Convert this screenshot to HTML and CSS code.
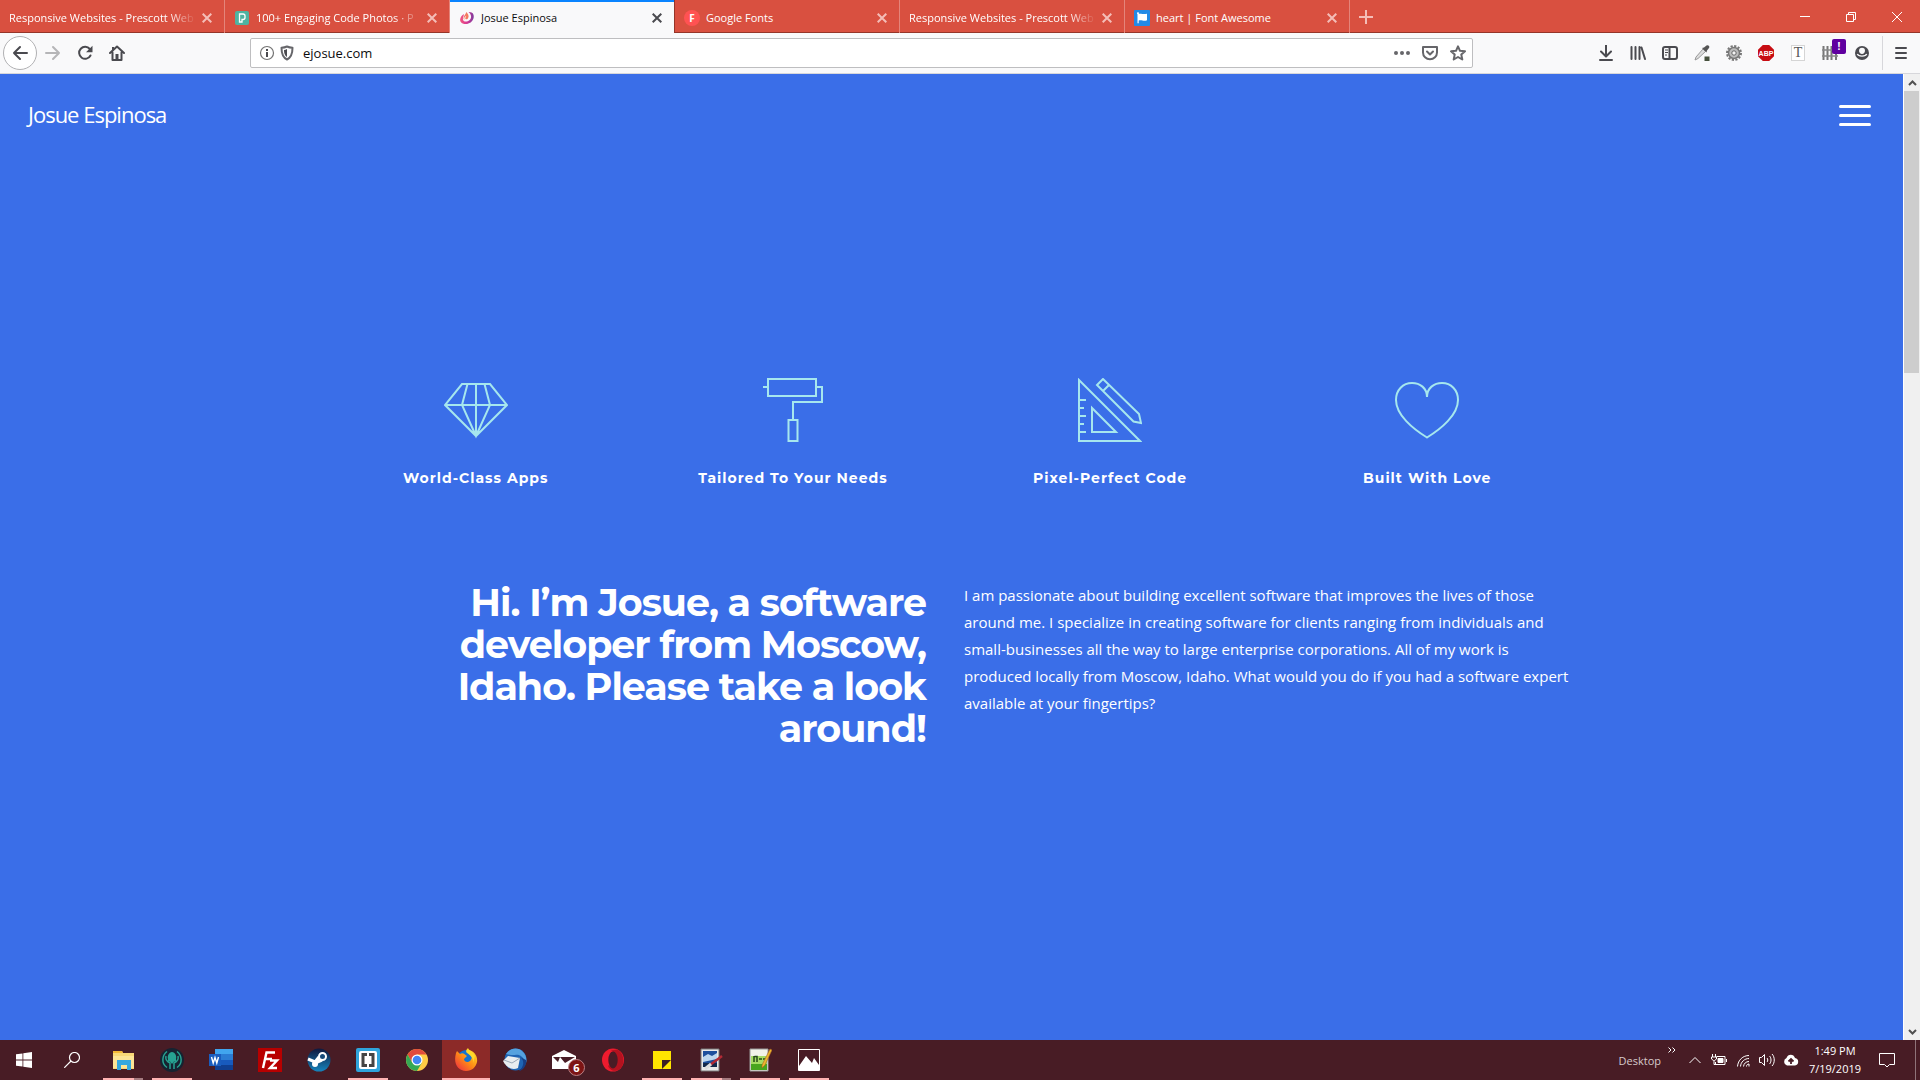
FILE: index.html
```html
<!DOCTYPE html>
<html lang="en">
<head>
<meta charset="utf-8">
<title>Josue Espinosa</title>
<link rel="stylesheet" href="styles.css">
</head>
<body>
<div class="tabstrip">
  <div class="tab tab-long">
    <button class="tab-title">Responsive Websites - Prescott Web</button>
    <button class="tab-close" aria-label="Close tab"><svg width="10" height="10" viewBox="0 0 10 10"><path d="M.7.7l8.6 8.6M9.3.7L.7 9.3"/></svg></button>
  </div>
  <div class="tab tab-long">
    <svg class="favicon" width="16" height="16" viewBox="0 0 16 16"><rect x="1" y="1" width="14" height="14" rx="2" fill="#4fb3a1"/><path d="M5.500 4h3.500a2 2 0 0 1 2 2v1.500a2 2 0 0 1-2 2H8v2.500H5.500z" fill="none" stroke="#fff" stroke-width="1.300"/></svg>
    <button class="tab-title">100+ Engaging Code Photos · P</button>
    <button class="tab-close" aria-label="Close tab"><svg width="10" height="10" viewBox="0 0 10 10"><path d="M.7.7l8.6 8.6M9.3.7L.7 9.3"/></svg></button>
  </div>
  <div class="tab tab-active">
    <svg class="favicon" width="16" height="16" viewBox="0 0 16 16"><defs><linearGradient id="swirl" x1="0" x2="1"><stop offset="0" stop-color="#f2577e"/><stop offset=".5" stop-color="#d83a94"/><stop offset="1" stop-color="#7a3a9d"/></linearGradient></defs><path d="M9.500 2C13.500 1.500 15.500 4.500 14.600 8c-1 4-4.600 6.200-8.300 6C3 13.900.6 12 1.200 9c.4-2.300 2-3.900 3.600-5 .2 2-1.100 3.400-.9 5.300.2 2 2 2.500 3.800 2.200 2.900-.5 4.800-3 4.300-5.500-.3-1.800-1.200-3-2.500-4z" fill="url(#swirl)"/><path d="M4.500 8.500C4.500 5.500 7 4.200 7.300 2c1.800 1.700 3.200 4.400 1.600 6.400C7.900 9.800 6 9.500 6.300 8c.2-.8.900-1.200.8-2-1.200.5-2.200 1.600-1.800 4.200z" fill="#f47a60"/></svg>
    <button class="tab-title">Josue Espinosa</button>
    <button class="tab-close" aria-label="Close tab"><svg width="10" height="10" viewBox="0 0 10 10"><path d="M.7.7l8.6 8.6M9.3.7L.7 9.3"/></svg></button>
  </div>
  <div class="tab">
    <span class="favicon favicon-f">F</span>
    <button class="tab-title">Google Fonts</button>
    <button class="tab-close" aria-label="Close tab"><svg width="10" height="10" viewBox="0 0 10 10"><path d="M.7.7l8.6 8.6M9.3.7L.7 9.3"/></svg></button>
  </div>
  <div class="tab tab-long">
    <button class="tab-title">Responsive Websites - Prescott Web</button>
    <button class="tab-close" aria-label="Close tab"><svg width="10" height="10" viewBox="0 0 10 10"><path d="M.7.7l8.6 8.6M9.3.7L.7 9.3"/></svg></button>
  </div>
  <div class="tab">
    <svg class="favicon" width="16" height="16" viewBox="0 0 16 16"><rect width="16" height="16" rx="1" fill="#228ae6"/><path d="M3 3.300a1 1 0 1 1 1.700.7c2.500-1 4 .9 8.300-.3v6.600c-3.600 1.600-5-.8-8.300.3v2.600H3.500V4.200A1 1 0 0 1 3 3.300z" fill="#fff"/></svg>
    <button class="tab-title">heart | Font Awesome</button>
    <button class="tab-close" aria-label="Close tab"><svg width="10" height="10" viewBox="0 0 10 10"><path d="M.7.7l8.6 8.6M9.3.7L.7 9.3"/></svg></button>
  </div>
  <button class="new-tab" aria-label="New tab"><svg width="14" height="14" viewBox="0 0 14 14"><path d="M7 0v14M0 7h14"/></svg></button>
  <div class="window-controls">
    <button aria-label="Minimize"><svg width="10" height="10" viewBox="0 0 10 10"><path d="M0 4.500h10"/></svg></button>
    <button aria-label="Restore"><svg width="10" height="10" viewBox="0 0 10 10"><path d="M.5 2.500h7v7h-7zM2.500 2.500v-2h7v7h-2"/></svg></button>
    <button aria-label="Close window"><svg width="10" height="10" viewBox="0 0 10 10"><path d="M0 0l10 10M10 0L0 10"/></svg></button>
  </div>
</div>

<div class="toolbar">
  <div class="nav-buttons">
    <button class="back" aria-label="Back"><svg width="16" height="16" viewBox="0 0 16 16"><path class="line" d="M15 8H2M8 2L2 8l6 6"/></svg></button>
    <button class="forward" aria-label="Forward"><svg width="16" height="16" viewBox="0 0 16 16"><path class="line" d="M1 8h13M8 2l6 6-6 6"/></svg></button>
    <button aria-label="Reload"><svg width="16" height="16" viewBox="0 0 16 16"><path class="line" d="M13.500 10.500A6 6 0 1 1 12.800 4"/><path class="solid" d="M15.500.7v6.500H9z"/></svg></button>
    <button aria-label="Home"><svg width="16" height="16" viewBox="0 0 16 16"><path class="line" d="M1 8l7-6.500L15 8M3.500 7.500V15h9V7.500"/><path class="solid" d="M6.500 9h3v6h-3zM3 2h2v3H3z"/></svg></button>
  </div>
  <div class="urlbar">
    <svg width="16" height="16" viewBox="0 0 16 16"><circle cx="8" cy="8" r="6.500" fill="none" stroke="#737373" stroke-width="1.200"/><path class="solid" d="M7 7h2v5H7zM7 4h2v2H7z"/></svg>
    <svg width="16" height="16" viewBox="0 0 16 16"><path class="line" d="M8 1.500c1.700.8 3.500 1.200 5.500 1.300 0 5.600-.9 9.600-5.500 11.700C3.400 12.400 2.500 8.400 2.500 2.800 4.500 2.700 6.300 2.300 8 1.500z"/><path class="solid" d="M8 4v8C5.600 10.400 5 8 5 5c1 0 2-.3 3-1z"/></svg>
    <input class="address" type="text" value="ejosue.com" aria-label="Address">
    <button aria-label="Page actions"><svg width="16" height="16" viewBox="0 0 16 16"><g fill="#66666a"><circle cx="2" cy="8" r="2"/><circle cx="8" cy="8" r="2"/><circle cx="14" cy="8" r="2"/></g></svg></button>
    <button aria-label="Save to Pocket"><svg width="16" height="16" viewBox="0 0 16 16"><path class="line" d="M1 2h14v5.500a7 6.800 0 0 1-14 0z"/><path class="line" d="M5 6.500l3 3 3-3"/></svg></button>
    <button aria-label="Bookmark"><svg width="16" height="16" viewBox="0 0 16 16"><path class="line" d="M8 1.300l2 4.500 5 .5-3.700 3.300 1 4.900L8 12l-4.300 2.500 1-4.900L1 6.300l5-.5z"/></svg></button>
  </div>
  <div class="tools">
    <button aria-label="Downloads"><svg width="16" height="16" viewBox="0 0 16 16"><path class="line" d="M8 0v11M3 6.500l5 5 5-5M2 15h12"/></svg></button>
    <button aria-label="Library"><svg width="16" height="16" viewBox="0 0 16 16"><path class="line" d="M1.500 2v12M5.500 2v12M9.500 2v12M11.500 2.500L15 14"/></svg></button>
    <button aria-label="Sidebars"><svg width="16" height="16" viewBox="0 0 16 16"><rect class="line" x="1" y="2" width="14" height="12" rx="2"/><path class="line" d="M7.500 2v12"/><path d="M3 5h3M3 7.500h3M3 10h2" stroke="#4a4a4f"/></svg></button>
    <button aria-label="Color picker"><svg width="16" height="16" viewBox="0 0 16 16"><path d="M1 15l1-3 7-8 2.500 2.500-7.500 7z" fill="#ddd" stroke="#999"/><path d="M8 3l2-.4L12.500.5c2-1 3.500 1 2.500 2.500L13 5.500l-.5 2z" fill="#555"/><path d="M10.500 11.500h5V16h-5z" fill="#46503c"/></svg></button>
    <button aria-label="Settings"><svg width="16" height="16" viewBox="0 0 16 16"><circle cx="8" cy="8" r="7" fill="none" stroke="#777" stroke-width="2" stroke-dasharray="2.200 1.460"/><circle cx="8" cy="8" r="5.500" fill="#bdbdbd" stroke="#777" stroke-width="1.500"/><circle cx="8" cy="8" r="2.200" fill="#f4f4f4" stroke="#666"/></svg></button>
    <button class="abp" aria-label="Adblock Plus">ABP</button>
    <button class="text-tool" aria-label="Font finder">T</button>
    <button class="fence" aria-label="Containers"><svg width="16" height="16" viewBox="0 0 16 16"><path d="M1.500 1v14M5.500 1v14M9.500 1v14M14 1v14" stroke="#777" stroke-width="2" fill="none"/><path d="M0 5h16M0 11h16" stroke="#888" stroke-width="1.500"/></svg><span class="alert">!</span></button>
    <button aria-label="Account"><svg width="16" height="16" viewBox="0 0 16 16"><circle class="solid" cx="8" cy="8" r="7"/><path d="M5 5.800a3 3 0 0 1 6 0c0 1.800-1.300 3.200-3 3.200S5 7.600 5 5.800z" fill="#f9f9fa"/><path d="M3.300 9c1 2.700 8.400 2.700 9.400 0" fill="none" stroke="#f9f9fa" stroke-width="1.300"/></svg></button>
  </div>
  <button class="app-menu" aria-label="Open menu"><svg width="14" height="16" viewBox="0 0 14 16"><path class="line" d="M2 3h10M2 8h10M2 13h10"/></svg></button>
</div>

<div class="viewport">
  <div class="site">
    <header class="site-header">
      <a class="brand" href="#">Josue Espinosa</a>
      <button class="menu-toggle" aria-label="Menu"><span></span><span></span><span></span></button>
    </header>
    <main class="content">
      <section class="features">
        <div class="feature">
          <svg width="64" height="64" viewBox="0 0 64 64"><path d="M18 6h28l17 21-31 31L1 27zM1 27h62M32 6v52M23.500 6L18 27l14 31 14-31-5.500-21"/></svg>
          <h3>World-Class Apps</h3>
        </div>
        <div class="feature">
          <svg width="64" height="64" viewBox="0 0 64 64"><path d="M7 1h48v17H7zM2 9h5M55 9h6v15H32v18M27.500 42h9v21h-9z"/></svg>
          <h3>Tailored To Your Needs</h3>
        </div>
        <div class="feature">
          <svg width="64" height="64" viewBox="0 0 64 64"><path d="M1 2v61h61zM14 30v24h24zM1 22h7M1 30h5M1 38h7M1 46h5M1 54h7M25 1l-6 6 36.500 36.500L63 45l-2-9zM25 13l6-6"/></svg>
          <h3>Pixel-Perfect Code</h3>
        </div>
        <div class="feature">
          <svg width="64" height="64" viewBox="0 0 64 64"><path d="M32 19C32 10 25 5 17 5 8 5 1 12 1 22c0 15 17 29 31 37.500C46 51 63 37 63 22 63 12 56 5 47 5 39 5 32 10 32 19z"/></svg>
          <h3>Built With Love</h3>
        </div>
      </section>
      <section class="intro">
        <h1>Hi. I’m Josue, a software developer from Moscow, Idaho. Please take a look around!</h1>
        <p>I am passionate about building excellent software that improves the lives of those around me. I specialize in creating software for clients ranging from individuals and small-businesses all the way to large enterprise corporations. All of my work is produced locally from Moscow, Idaho. What would you do if you had a software expert available at your fingertips?</p>
      </section>
    </main>
  </div>
  <div class="scrollbar">
    <button aria-label="Scroll up"><svg width="9" height="6" viewBox="0 0 9 6"><path d="M1 5l3.500-3.500L8 5"/></svg></button>
    <div class="track"><div class="thumb"></div></div>
    <button aria-label="Scroll down"><svg width="9" height="6" viewBox="0 0 9 6"><path d="M1 1l3.500 3.500L8 1"/></svg></button>
  </div>
</div>

<div class="taskbar">
  <div class="launch">
    <button aria-label="Start"><svg width="16" height="16" viewBox="0 0 16 16"><path d="M0 2.300l6.500-.9v6.100H0zM7.300 1.200L16 0v7.500H7.300zM0 8.400h6.500v6.200L0 13.700zM7.300 8.400H16V16l-8.700-1.200z" fill="#fff"/></svg></button>
    <button aria-label="Search"><svg width="16" height="16" viewBox="0 0 16 16"><circle cx="10.500" cy="5.500" r="5" fill="none" stroke="#fff" stroke-width="1.200"/><path d="M7 9l-6.800 6.800" stroke="#fff" stroke-width="1.200"/></svg></button>
  </div>
  <div class="apps">
    <button class="open stacked" aria-label="File Explorer"><svg width="24" height="24" viewBox="0 0 24 24"><path d="M2 3h9l1 2h11v16H2z" fill="#f9d978"/><path d="M2 3h9l1 2H2z" fill="#f4b836"/><path d="M2 8h21v12H2z" fill="#fde596"/><path d="M6 12h14v10h-4v-5h-6v5H6z" fill="#35a8e0"/></svg></button>
    <button class="open" aria-label="GitKraken"><svg width="24" height="24" viewBox="0 0 24 24"><circle cx="12" cy="12" r="12" fill="#162331"/><g fill="none" stroke="#27a291" stroke-width="1.500"><path d="M7 3.500c-5 4-6 12 0 16M17 3.500c5 4 6 12 0 16M6 8c-1 4 1.500 6 4 7v6M18 8c1 4-1.500 6-4 7v6"/></g><path d="M12 4c3 0 5 4 4 7l.5 3-2.500-.5-2 2.500-2-2.500-2.500.5.500-3c-1-3 1-7 4-7z" fill="#27a291"/></svg></button>
    <button aria-label="Word"><svg width="24" height="24" viewBox="0 0 24 24"><path d="M6 1h18v6H6z" fill="#41a5ee"/><path d="M6 6h18v6H6z" fill="#2b7cd3"/><path d="M6 12h18v5H6z" fill="#185abd"/><path d="M6 17h18v5H6z" fill="#103f91"/><path d="M0 6h12v12H0z" fill="#1a5dbe"/><path d="M2.500 9l1.700 6L6 9.500 7.800 15l1.700-6" fill="none" stroke="#fff" stroke-width="1.400"/></svg></button>
    <button aria-label="FileZilla"><svg width="24" height="24" viewBox="0 0 24 24"><path d="M0 0h24v24H0z" fill="#b80000"/><path d="M5 20L8.500 4.500H17M7 11h7M12 12.500h7L12 20h7" fill="none" stroke="#fff" stroke-width="2.400"/></svg></button>
    <button aria-label="Steam"><svg width="24" height="24" viewBox="0 0 24 24"><defs><linearGradient id="steam" x2="0" y2="1"><stop offset="0" stop-color="#10173c"/><stop offset="1" stop-color="#1684bd"/></linearGradient></defs><circle cx="12" cy="12" r="11.500" fill="url(#steam)"/><path d="M1 11l7 3 4-5M8 15l7-3" stroke="#fff" stroke-width="3" fill="none"/><circle cx="15.500" cy="8.500" r="3.500" fill="#174b79" stroke="#fff" stroke-width="2"/><circle cx="8" cy="16" r="3" fill="#fff"/></svg></button>
    <button class="open" aria-label="Brackets"><svg width="24" height="24" viewBox="0 0 24 24"><rect width="24" height="24" rx="2" fill="#2fa4dc"/><rect x="3" y="3" width="18" height="18" rx="2" fill="#fff"/><path d="M11 6.500H7v11h4M13 6.500h4v11h-4" fill="none" stroke="#444" stroke-width="3"/></svg></button>
    <button aria-label="Chrome"><svg width="24" height="24" viewBox="0 0 24 24"><circle cx="12" cy="12" r="11" fill="#fc4"/><path d="M2.500 6.500A11 11 0 0 1 21.500 6.500H12L7.200 14.700z" fill="#e14b3b"/><path d="M2.500 6.500A11 11 0 0 0 12 23l4.800-8.300-9.600-.2z" fill="#35a854"/><circle cx="12" cy="12" r="5.500" fill="#fff"/><circle cx="12" cy="12" r="4.300" fill="#4285f4"/></svg></button>
    <button class="open current" aria-label="Firefox"><svg width="24" height="24" viewBox="0 0 24 24"><defs><linearGradient id="fox" x1="1" y1="0" x2="0" y2="1"><stop offset="0" stop-color="#ffe226"/><stop offset=".5" stop-color="#ff8a16"/><stop offset="1" stop-color="#ed2447"/></linearGradient></defs><circle cx="12" cy="11" r="9" fill="#1473cf"/><path d="M2 5l1-2 3 3c3-2 5 1 7 2l-3 3c0 3 4 4 6 2 3-3 2-7-1-11 5 1 9 6 8 12-1 5-5 9-11 9C4 23-1 16 2 5z" fill="url(#fox)"/><path d="M13 5c-2-2 0-4 1-5 1 3 5 3 7 8l-2 7c1-5-3-8-6-10z" fill="#ffd62b"/></svg></button>
    <button aria-label="Thunderbird"><svg width="24" height="24" viewBox="0 0 24 24"><circle cx="12.500" cy="11.500" r="11" fill="#1f65b4"/><path d="M3 6C7 0 14-1 19 3c4 3 5 8 4 12-3-7-7-9-11-8-4 0-6 0-9-1z" fill="#55a2df"/><path d="M0 13l5-5 12 2-2 10c-6 3-12-1-15-7z" fill="#e8edf0"/><path d="M1 12l8 3 8-5" fill="none" stroke="#9aa9b8"/><path d="M17 9c5 3 4 10-1 14 5-1 8-7 7-11z" fill="#173f86"/></svg></button>
    <button class="mail" aria-label="Mail"><svg width="24" height="24" viewBox="0 0 24 24"><path d="M0 8l12-6 12 6v13H0z" fill="#fff"/><path d="M1 9h22l-10 6L8 9l-2 5z" fill="#481c25"/></svg><span class="count">6</span></button>
    <button aria-label="Opera"><svg width="24" height="24" viewBox="0 0 24 24"><ellipse cx="12" cy="12" rx="11" ry="11.500" fill="#ee1b2e"/><path d="M16 1.500c8 3 9 18 0 21-4 1-8-1-9-5 9 1 10-12 3-15z" fill="#b3121f"/><ellipse cx="12" cy="12" rx="4.700" ry="8.500" fill="#481c25"/></svg></button>
    <button class="open" aria-label="Sticky Notes"><svg width="24" height="24" viewBox="0 0 24 24"><path d="M3 3h18v18H3z" fill="#ffe500"/><path d="M12 12h9l-9 9z" fill="#3b1e25"/></svg></button>
    <button class="open stacked" aria-label="Paint"><svg width="24" height="24" viewBox="0 0 24 24"><path d="M2 1h18v22H2z" fill="#e9e9e9" stroke="#777"/><path d="M4 3h14v16H4z" fill="#1d4f9c"/><path d="M4 9l5-3 4 2 5-3v6L4 14z" fill="#bcd6ee"/><path d="M4 15h14v4H4z" fill="#14294a"/><path d="M11 17L23 8" stroke="#b22a35" stroke-width="2.500"/><path d="M6 21l6-5" stroke="#ddd" stroke-width="3"/></svg></button>
    <button class="open" aria-label="Notepad++"><svg width="24" height="24" viewBox="0 0 24 24"><path d="M2 1h18v22H2z" fill="#f2f3e8" stroke="#999"/><path d="M3 8h16v14H3z" fill="#a5dc62"/><path d="M3 16h16v6H3z" fill="#48a51d"/><path d="M6 8v6M6.500 8.500H9V14M11 11h3M15 11h3" fill="none" stroke="#254a19" stroke-width="1.500"/><path d="M14 17l8-16 2 1-7 15-3 3z" fill="#edb82c" stroke="#a85e24" stroke-width=".6"/></svg></button>
    <button class="open" aria-label="Photos"><svg width="24" height="24" viewBox="0 0 24 24"><path d="M1.500 1.500h21v21h-21z" fill="none" stroke="#fff"/><path d="M2 18l7-10 6 7 2-5 5 7v5H2z" fill="#fff"/></svg></button>
  </div>
  <div class="tray">
    <span class="desktop-label">Desktop</span>
    <button class="overflow" aria-label="More toolbars"><svg width="8" height="6" viewBox="0 0 8 6"><path d="M.5.5L3 3 .5 5.500M4.500.5L7 3 4.500 5.500"/></svg></button>
    <button aria-label="Hidden icons"><svg width="16" height="16" viewBox="0 0 16 16"><path d="M2.500 11L8 5.500l5.500 5.500"/></svg></button>
    <button aria-label="Battery"><svg width="16" height="16" viewBox="0 0 16 16"><path d="M5.500 4.500H14v8H4.500V10M15.500 7v3M1.500 2v3M4.500 2v3M.5 5h5v2l-2 1.500h-1L.5 7zM3 8.500v4h2"/><path d="M7 6.500h5v4H7z" fill="#fff"/></svg></button>
    <button aria-label="Network"><svg width="16" height="16" viewBox="0 0 16 16"><path d="M2.500 14.500C3 8 8 3.500 14 3.500M5.500 14.500c.3-4.500 4-8 8.500-8M8.500 14.500c.3-3 2.500-5 5.500-5M11.500 14.500c0-1.500 1-2.500 2.500-2.500v2.500"/></svg></button>
    <button aria-label="Volume"><svg width="16" height="16" viewBox="0 0 16 16"><path d="M.5 5.500h2l3-3v11l-3-3h-2zM8 6c1 1 1 3 0 4M10.500 4c2 2 2 6 0 8M13 2c3 3 3 9 0 12"/></svg></button>
    <button class="cloud" aria-label="Backup"><svg width="16" height="16" viewBox="0 0 16 16"><path d="M4 13.500a4 4 0 0 1-.5-7.500C4.500 1.500 11 1.500 12 6a3.800 3.800 0 0 1 0 7.500z" fill="#fff"/><path d="M8 12V7.500M5.500 9.500L8 7l2.500 2.500" fill="none" stroke="#481c25" stroke-width="1.800"/></svg></button>
    <button class="clock"><span>1:49 PM</span><span>7/19/2019</span></button>
    <button class="notify" aria-label="Notifications"><svg width="16" height="16" viewBox="0 0 16 16"><path d="M.5 1.500h15v11h-5L8 15l-2.500-2.500h-5z"/></svg></button>
    <button class="show-desktop" aria-label="Show desktop"></button>
  </div>
</div>
</body>
</html>
```

FILE: styles.css
```css
* { box-sizing: border-box; }

body {
  margin: 0;
  min-height: 100vh;
  display: flex;
  flex-direction: column;
  font-family: "Open Sans", "Noto Sans", sans-serif;
}

button {
  display: flex;
  align-items: center;
  justify-content: center;
  flex: none;
  margin: 0;
  padding: 0;
  border: 0;
  background: none;
  color: inherit;
  font: inherit;
}

svg { display: block; flex: none; }

/* Browser tabs */
.tabstrip {
  display: flex;
  height: 33px;
  background: #d95040;
  color: #fff;
  font-size: 11px;
  box-shadow: inset 0 -1px #953529;
}
.tab {
  display: flex;
  align-items: center;
  gap: 6px;
  flex: 0 1 225px;
  min-width: 0;
  padding: 2px 12px 0 9px;
  border-right: 1px solid #e4857a;
}
.tab-title {
  flex: 1;
  min-width: 0;
  justify-content: flex-start;
  overflow: hidden;
  white-space: nowrap;
}
.tab-long .tab-title {
  -webkit-mask-image: linear-gradient(to left, transparent, #000 28px);
  mask-image: linear-gradient(to left, transparent, #000 28px);
}
.tab-close svg, .new-tab svg {
  fill: none;
  stroke: #f4bdb7;
  stroke-width: 2;
}
.tab-active {
  background: #f9f9fa;
  color: #0c0c0d;
  border-right-color: #953529;
  box-shadow: inset 0 2px #0a84ff;
}
.tab-active .tab-close svg { stroke: #4a4a4f; }
.favicon { width: 16px; height: 16px; flex: none; }
.favicon-f {
  border-radius: 50%;
  background: #ff5252;
  font-size: 10px;
  line-height: 16px;
  font-weight: 700;
  text-align: center;
}
.new-tab { width: 32px; }
.window-controls { display: flex; margin-left: auto; }
.window-controls button { width: 46px; }
.window-controls svg { fill: none; stroke: #fff; }

/* Browser toolbar */
.toolbar {
  display: flex;
  align-items: center;
  height: 41px;
  padding-left: 3px;
  background: #f9f9fa;
  border-bottom: 1px solid #d7d7db;
  color: #4a4a4f;
}
.line {
  fill: none;
  stroke: #4a4a4f;
  stroke-width: 2;
  stroke-linejoin: round;
  stroke-linecap: round;
}
.solid { fill: #4a4a4f; }
.nav-buttons { display: flex; align-items: center; flex: none; width: 247px; }
.nav-buttons button { width: 32px; height: 32px; }
.nav-buttons .back {
  width: 34px;
  height: 34px;
  border: 1px solid #b1b1b3;
  border-radius: 50%;
  background: #fff;
}
.forward .line { stroke: #b5b5b7; }
.urlbar {
  display: flex;
  align-items: center;
  gap: 4px;
  flex: 1 1 1223px;
  max-width: 1223px;
  height: 30px;
  padding: 0 2px 0 8px;
  border: 1px solid #bebec0;
  border-radius: 2px;
  background: #fff;
}
.urlbar .line { stroke: #66666a; }
.urlbar button { width: 24px; height: 24px; }
.address {
  flex: 1;
  min-width: 0;
  padding: 0 4px;
  border: 0;
  background: none;
  color: #0c0c0d;
  font-family: inherit;
  font-size: 13px;
}
.tools { display: flex; margin-left: auto; }
.tools button { width: 32px; height: 32px; }
.tools .abp {
  width: 16px;
  height: 16px;
  margin: 8px;
  background: #c70d13;
  clip-path: polygon(30% 0, 70% 0, 100% 30%, 100% 70%, 70% 100%, 30% 100%, 0 70%, 0 30%);
  color: #fff;
  font-family: "Liberation Sans", sans-serif;
  font-size: 7px;
  font-weight: 700;
}
.tools .text-tool {
  width: 14px;
  height: 16px;
  margin: 8px 9px;
  border: 1px solid #d5d5d5;
  background: #fff;
  color: #555;
  font-family: "Liberation Serif", serif;
  font-size: 14px;
}
.fence { position: relative; }
.alert {
  position: absolute;
  top: 2px;
  right: 0;
  width: 14px;
  height: 15px;
  border-radius: 2px;
  background: #60009f;
  color: #fff;
  font-size: 10px;
  line-height: 14px;
  font-weight: 700;
}
.app-menu {
  width: 38px;
  height: 34px;
  margin-left: 4px;
  padding-right: 2px;
  border-left: 1px solid #d7d7db;
}

/* Page area */
.viewport { display: flex; flex: 1; }
.site {
  flex: 1;
  min-width: 0;
  background: #3a6ee8;
  color: #fff;
}
.site-header {
  display: flex;
  align-items: center;
  justify-content: space-between;
  height: 80px;
  padding: 0 32px 0 28px;
}
.brand {
  color: inherit;
  font-size: 22px;
  letter-spacing: -1px;
  text-decoration: none;
}
.menu-toggle { flex-direction: column; gap: 6px; padding-top: 3px; }
.menu-toggle span {
  width: 32px;
  height: 3px;
  border-radius: 2px;
  background: #fff;
}
.content { width: 66.667%; margin: 0 auto; padding: 224px 0 80px; }
.features { display: grid; grid-template-columns: repeat(4, 1fr); }
.feature {
  display: flex;
  flex-direction: column;
  align-items: center;
  gap: 24px;
}
.feature svg { fill: none; stroke: #a6e7ee; stroke-width: 2; }
.feature h3 {
  margin: 0;
  font-family: "Montserrat", "Inter", sans-serif;
  font-size: 14px;
  line-height: 24px;
  font-weight: 700;
  letter-spacing: 1px;
}
.intro {
  display: grid;
  grid-template-columns: 609fr 622fr;
  column-gap: 38px;
  margin-top: 92px;
}
.intro h1 {
  margin: 0;
  padding-left: 38px;
  font-family: "Montserrat", "Inter", sans-serif;
  font-size: 38px;
  line-height: 42px;
  font-weight: 700;
  letter-spacing: -1px;
  text-align: right;
}
.intro p { margin: 0; padding-right: 12px; font-size: 15px; line-height: 27px; }

.scrollbar {
  display: flex;
  flex-direction: column;
  width: 17px;
  background: #f0f0f0;
  border-left: 1px solid #fff;
}
.scrollbar button { height: 17px; }
.scrollbar svg { fill: none; stroke: #505050; stroke-width: 2; }
.track { flex: 1; }
.thumb { width: 15px; height: 282px; background: #cdcdcd; }

/* Taskbar */
.taskbar {
  display: flex;
  height: 40px;
  background: #481c25;
  color: #fff;
  font-size: 11px;
}
.launch, .apps, .tray { display: flex; }
.launch button, .apps button { width: 48px; height: 40px; }
.apps { gap: 1px; padding-left: 3px; }
.open {
  background: linear-gradient(#ffb3b3, #ffb3b3) 50% 100% / 40px 2px no-repeat;
}
.stacked {
  background-image: linear-gradient(to right, #ffb3b3 31px, #a67b80 31px);
}
.current { background-color: #8c2a28; background-size: 48px 2px; }
.mail { position: relative; }
.count {
  position: absolute;
  right: 3px;
  bottom: 4px;
  width: 17px;
  height: 17px;
  border: 1px solid #b98085;
  border-radius: 50%;
  background: #7d1414;
  line-height: 15px;
  font-weight: 700;
}
.tray { align-items: center; margin-left: auto; }
.tray button { width: 24px; height: 40px; }
.tray svg { fill: none; stroke: #fff; }
.desktop-label { color: #d6cacc; }
.tray .overflow { align-self: flex-start; width: 22px; height: 20px; }
.tray .cloud svg { stroke: none; }
.tray .clock {
  flex-direction: column;
  width: 64px;
  line-height: 18px;
}
.tray .notify { width: 40px; }
.tray .show-desktop { width: 5px; margin-left: 8px; border-left: 1px solid #8f7379; }
```
